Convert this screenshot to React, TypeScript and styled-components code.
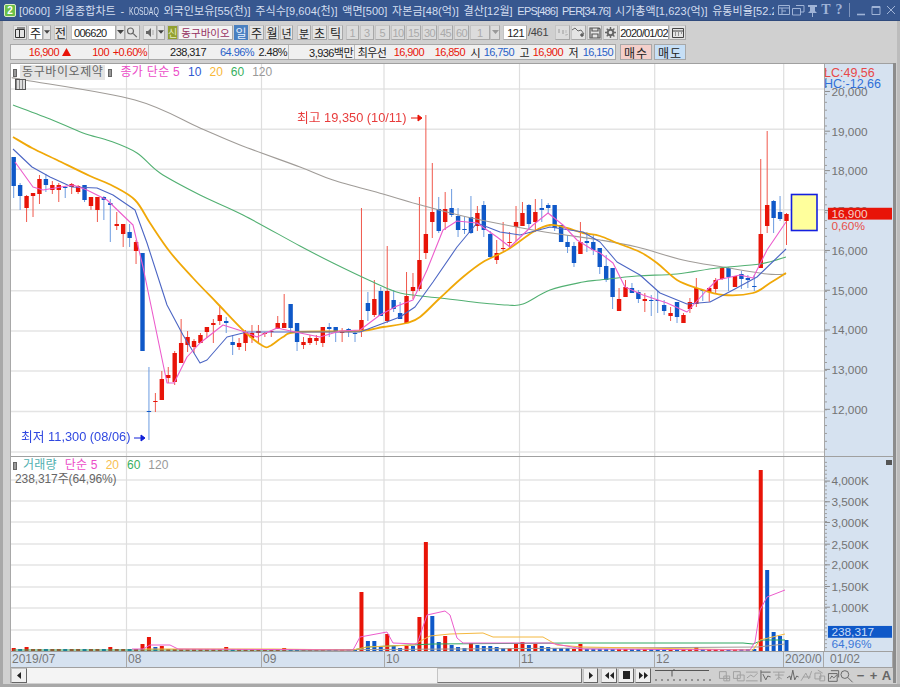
import React from 'react'
import styled, { createGlobalStyle } from 'styled-components'

const FONT = `"Liberation Sans", "Noto Sans CJK KR", sans-serif`
const RED = '#e81408'
const BLUE = '#0f58c8'

const GlobalStyle = createGlobalStyle`
  html, body { margin: 0; padding: 0; background: #d0d0d0; }
  * { box-sizing: border-box; }
`

const Window = styled.div`
  width: 900px;
  height: 687px;
  overflow: hidden;
  display: flex;
  flex-direction: column;
  background: #d0d0d0;
  font-family: ${FONT};
  border-bottom: 3px solid #a8a8a8;
  box-shadow: inset 3px 0 0 #a8a8a8, inset -3px 0 0 #bcbcbc;
`

const TitleBar = styled.div`
  height: 21px;
  flex: none;
  display: flex;
  align-items: center;
  padding-left: 4px;
  background: #37578f;
  color: #d4def0;
  font-size: 11px;
  white-space: nowrap;
  border-bottom: 1px solid #2f4a7c;
`

const Badge = styled.div`
  width: 12px;
  height: 13px;
  flex: none;
  border-radius: 2px;
  background: #6cc04a;
  border: 1px solid #dff0c8;
  color: #fff;
  font-size: 10px;
  font-weight: bold;
  line-height: 11px;
  text-align: center;
`

const TitleText = styled.div`
  width: 755px;
  margin-left: 3px;
  overflow: hidden;
  letter-spacing: 0.07px;
  word-spacing: 1.5px;
`

const NarrowWord = styled.span`
  display: inline-block;
  width: 30px;
  transform: scaleX(0.63);
  transform-origin: left center;
`

const TightWord = styled.span`
  letter-spacing: -0.8px;
`

const TitleIcons = styled.div`
  display: flex;
  align-items: center;
  margin-left: 3px;
  color: #9fb3d6;
`

const TitleGlyph = styled.span`
  width: 12px;
  margin-left: ${p => p.$ml ?? 0}px;
  text-align: center;
  font-size: 14px;
  font-weight: bold;
  font-family: "Liberation Serif", serif;
`

const TitleDivider = styled.div`
  width: 1px;
  height: 14px;
  margin: 0 6px 0 4px;
  background: #7f95bd;
`

const ToolRow = styled.div`
  height: 15px;
  flex: none;
  display: flex;
  align-items: stretch;
  margin-top: 4px;
  padding-left: 13px;
`

const Btn = styled.div`
  width: ${p => p.$w}px;
  margin-left: ${p => p.$ml ?? 0}px;
  flex: none;
  display: flex;
  align-items: center;
  justify-content: ${p => p.$right ? 'flex-end' : p.$left ? 'flex-start' : 'center'};
  padding-right: ${p => p.$right ? 2 : 0}px;
  padding-left: ${p => p.$left ? 2 : 0}px;
  font-size: ${p => p.$fs ?? 12}px;
  color: ${p => ({ white: '#222', raised: '#222', active: '#e8f0ff', flat: '#aaa', olive: '#e6ecc0', name: '#963060' }[p.$tone ?? 'raised'])};
  background: ${p => ({ white: '#fff', raised: '#e4e4e4', active: '#4a80c0', flat: '#dcdcdc', olive: '#92a030', name: '#f4f4f4' }[p.$tone ?? 'raised'])};
  border: 1px solid ${p => p.$tone === 'active' ? '#4a80c0' : '#a8a8a8'};
  border-left-color: ${p => p.$tone === 'active' ? '#4a80c0' : '#c4c4c4'};
  border-top-color: ${p => p.$tone === 'active' ? '#4a80c0' : '#c4c4c4'};
  white-space: nowrap;
  overflow: hidden;
  letter-spacing: ${p => p.$sp ?? 0}px;
`

const PageCount = styled.div`
  width: 19px;
  flex: none;
  margin-left: 1px;
  font-size: 11px;
  line-height: 15px;
  color: #444;
  letter-spacing: -0.3px;
`

const QuoteRow = styled.div`
  height: 16px;
  flex: none;
  display: flex;
  margin-top: 4px;
  padding-left: 10px;
`

const QuoteBox = styled.div`
  width: 606px;
  flex: none;
  display: flex;
  background: #f0f0f0;
  border: 1px solid #a8a8a8;
`

const Cell = styled.div`
  width: ${p => p.$w}px;
  flex: none;
  display: flex;
  align-items: center;
  justify-content: ${p => p.$center ? 'center' : 'flex-end'};
  padding-right: ${p => p.$center ? 0 : 1}px;
  font-size: 11px;
  letter-spacing: -0.55px;
  white-space: nowrap;
  color: ${p => p.$c ?? '#222'};
  border-right: ${p => p.$div ? '1px solid #bcbcbc' : 'none'};
`

const UpMark = styled.svg`
  width: 9px;
  height: 8px;
  margin-left: 3px;
  flex: none;
`

const OrderBtn = styled.div`
  width: ${p => p.$w}px;
  margin-left: ${p => p.$ml}px;
  flex: none;
  display: flex;
  align-items: center;
  justify-content: center;
  font-size: 12px;
  letter-spacing: 1px;
  color: #222;
  background: ${p => p.$bg};
  border: 1px solid #a8a8a8;
`

const Frame = styled.div`
  width: 882px;
  margin: 3px 0 0 11px;
  flex: none;
  display: flex;
  flex-direction: column;
  border-top: 1px solid #a0a0a0;
  box-shadow: 3px 0 0 #8c8c8c, -1px 0 0 #a8a8a8;
`

const Panel = styled.div`
  position: relative;
  height: ${p => p.$h}px;
  flex: none;
  display: flex;
  border-bottom: 1px solid #a0a0a0;
`

const Plot = styled.svg`
  width: 813px;
  height: 100%;
  flex: none;
  display: block;
  background: #fff;
  filter: blur(0.25px);
`

const Axis = styled.svg`
  width: 69px;
  height: 100%;
  flex: none;
  display: block;
  background: #d6e2f0;
  border-left: 1px solid #a8a8a8;
`

const Legend = styled.div`
  position: absolute;
  left: 2px;
  top: 1px;
  display: flex;
  align-items: center;
  gap: 8px;
  font-size: 12px;
  line-height: 15px;
  white-space: nowrap;
`

const LegendItem = styled.span`
  color: ${p => p.$c};
  letter-spacing: ${p => p.$sp ?? 0}px;
`

const Handle = styled.span`
  width: 4px;
  height: 8px;
  flex: none;
  background: #999;
  border: 1px solid #666;
  margin-right: ${p => p.$mr ?? 0}px;
`

const StockTag = styled.span`
  background: #e4e4e4;
  color: #666;
  padding: 0 2px;
  margin: 0 -5px;
  letter-spacing: 0.6px;
`

const GridBtn = styled.div`
  position: absolute;
  left: 4px;
  top: 15px;
  width: 11px;
  height: 11px;
  background: repeating-linear-gradient(90deg, #888 0 1px, #ddd 1px 3px);
  border: 1px solid #555;
`

const SubText = styled.div`
  position: absolute;
  left: 4px;
  top: 15px;
  font-size: 12px;
  line-height: 14px;
  color: #666;
  letter-spacing: -0.1px;
`

const AxisNote = styled.div`
  position: absolute;
  left: 813px;
  top: ${p => p.$top}px;
  font-size: 12.5px;
  line-height: 12px;
  color: ${p => p.$c};
  white-space: nowrap;
`

const CornerBtn = styled.div`
  position: absolute;
  right: 1px;
  top: 3px;
  width: 6px;
  height: 5px;
  background: #555;
`

const TimeRow = styled.div`
  height: 16px;
  flex: none;
  display: flex;
  background: #d6e2f0;
  border-bottom: 1px solid #a0a0a0;
`

const TimeCell = styled.div`
  width: ${p => p.$w}px;
  flex: none;
  padding-left: ${p => p.$pl ?? 1}px;
  font-size: 12px;
  line-height: 15px;
  color: #777;
  border-right: 1px solid #a8a8a8;
  white-space: nowrap;
`

const ScrollRow = styled.div`
  height: 15px;
  flex: none;
  display: flex;
  align-items: stretch;
`

const Track = styled.div`
  width: 555px;
  flex: none;
  display: flex;
  justify-content: flex-end;
  background: #f4f4f4;
`

const Thumb = styled.div`
  width: 145px;
  background: #f0f0f0;
  border: 1px solid #c4c4c4;
  border-right-color: #777;
  border-bottom-color: #777;
`

const ScrollBtn = styled.div`
  width: ${p => p.$w ?? 15}px;
  margin-left: ${p => p.$ml ?? 0}px;
  flex: none;
  display: flex;
  align-items: center;
  justify-content: center;
  background: #f0f0f0;
  border: 1px solid #c4c4c4;
  border-right-color: #666;
  border-bottom-color: #666;
`

const ZoomSlider = styled.svg`
  width: 57px;
  height: 15px;
  margin-left: 4px;
  flex: none;
`

const MiniIcons = styled.div`
  display: flex;
  align-items: center;
  margin-left: 6px;
  color: #999;
`

const Mini = styled.svg`
  width: 13.6px;
  height: 14px;
  flex: none;
`

const ZoomKey = styled.span`
  width: 13px;
  flex: none;
  text-align: center;
  font-size: 13px;
  font-weight: bold;
  color: #666;
`

type Candle = [string, number, number, number, number]

// c, high, body top, body bottom, low (page pixels)
const candles: Candle[] = [
  ['b',157,157,186,198],['b',183,185,196,210],['r',195,196,208,222],['r',193,193,196,217],
  ['r',175,179,194,204],['b',174,179,185,192],['r',181,185,190,194],['r',183,185,190,202],
  ['b',186,187,188,198],['r',183,184,187,194],['r',185,186,192,194],['b',185,185,200,202],
  ['r',197,197,206,210],['r',197,197,210,222],['b',196,197,200,220],['b',199,203,205,242],
  ['r',212,224,226,230],['r',224,224,234,247],['b',224,232,238,247],['r',240,242,251,264],
  ['b',253,253,351,351],['b',367,411,412,440],['r',393,401,402,412],['r',371,379,400,400],
  ['r',367,375,378,383],['r',351,353,382,385],['r',319,343,363,363],['r',331,337,345,352],
  ['r',339,341,347,353],['r',333,335,343,343],['r',327,327,332,338],['r',319,323,325,343],
  ['r',305,315,321,325],['b',317,321,323,333],['b',335,342,345,355],['r',338,343,347,350],
  ['r',330,332,343,351],['r',325,333,338,343],['r',325,331,333,343],['r',332,333,334,337],
  ['r',330,331,332,337],['r',316,323,329,329],['r',294,323,328,328],['b',304,304,328,332],
  ['b',323,323,342,351],['r',337,342,345,349],['r',335,338,343,345],['r',335,338,341,345],
  ['r',327,327,343,347],['b',323,327,329,337],['b',327,327,332,342],['r',328,331,333,342],
  ['b',328,329,332,337],['b',330,333,334,342],['r',208,320,331,337],['b',292,303,311,321],
  ['r',280,299,315,317],['b',287,291,316,316],['r',246,291,321,323],['b',290,300,309,312],
  ['b',302,313,319,319],['r',272,296,323,323],['r',273,287,291,299],['r',197,260,289,291],
  ['r',115,234,253,259],['r',163,212,222,238],['b',197,209,231,233],['r',192,209,222,230],
  ['b',189,208,215,217],['b',208,216,230,237],['b',217,229,230,234],['b',196,217,233,234],
  ['r',206,213,226,231],['b',201,205,230,237],['b',231,234,257,258],['r',240,253,260,264],
  ['r',222,248,249,251],['r',232,242,243,248],['r',206,222,227,241],['r',202,213,226,226],
  ['b',204,205,224,230],['r',199,212,222,232],['b',199,208,210,222],['b',203,205,208,213],
  ['b',205,205,228,231],['b',225,225,242,242],['b',235,242,247,253],['b',242,246,263,267],
  ['r',222,242,254,254],['b',232,241,243,252],['b',234,242,250,255],['b',248,248,267,274],
  ['b',255,266,280,282],['b',268,268,297,309],['r',288,299,311,311],['r',280,287,297,297],
  ['b',283,288,293,293],['b',290,292,299,303],['r',293,299,301,312],['b',295,300,301,316],
  ['b',291,300,301,313],['b',300,305,311,315],['r',307,313,316,321],['b',302,302,317,323],
  ['r',313,315,323,323],['r',298,302,309,313],['r',278,288,304,307],['b',290,290,291,301],
  ['r',288,288,292,302],['r',278,280,289,293],['r',267,268,279,280],['b',267,268,277,291],
  ['r',276,276,287,287],['b',271,274,279,289],['b',275,278,280,288],['b',275,286,287,291],
  ['r',159,234,268,268],['r',131,205,226,233],['b',200,201,218,233],['b',196,212,219,221],
  ['r',213,214,221,245],
]

const candleX = (i: number) => 13.7 + i * 6.44

// catmull-rom through the read-off points so the slow averages don't look kinked
const smooth = (pts: number[][]) => {
  let d = `M${pts[0][0]} ${pts[0][1]}`
  for (let i = 0; i < pts.length - 1; i++) {
    const p0 = pts[i - 1] ?? pts[i]
    const p1 = pts[i]
    const p2 = pts[i + 1]
    const p3 = pts[i + 2] ?? p2
    const c1x = p1[0] + (p2[0] - p0[0]) / 6
    const c1y = p1[1] + (p2[1] - p0[1]) / 6
    const c2x = p2[0] - (p3[0] - p1[0]) / 6
    const c2y = p2[1] - (p3[1] - p1[1]) / 6
    d += `C${c1x.toFixed(1)} ${c1y.toFixed(1)} ${c2x.toFixed(1)} ${c2y.toFixed(1)} ${p2[0]} ${p2[1]}`
  }
  return d
}

const toPoints = (pts: number[][]) => pts.map(p => p.join(',')).join(' ')

const ma5 = [[15,162],[33,187],[43,190],[73,185],[87,190],[107,200],[133,225],[143,267],[167,383],[174,383],[187,357],[200,343],[223,325],[245,332],[257,337],[277,328],[300,333],[320,337],[340,331],[360,330],[380,315],[397,306],[413,300],[427,270],[443,230],[457,221],[477,223],[497,237],[510,247],[533,225],[548,213],[563,225],[577,240],[593,250],[600,253],[613,263],[625,287],[643,295],[667,303],[687,312],[707,290],[717,280],[740,275],[753,278],[767,250],[786,222]]
const ma10 = [[13,149],[32,167],[50,177],[72,187],[97,188],[113,195],[135,210],[147,243],[167,305],[183,335],[200,363],[207,360],[227,337],[247,332],[293,332],[360,332],[400,317],[415,307],[433,282],[457,247],[477,223],[500,232],[520,235],[550,227],[583,232],[600,242],[617,262],[640,275],[660,293],[687,304],[710,302],[733,290],[757,277],[786,249]]
const ma20 = [[13,137],[32,148],[57,160],[90,176],[113,186],[135,200],[150,223],[170,252],[193,278],[217,303],[245,332],[263,346],[270,346],[283,337],[297,332],[360,331],[383,327],[407,323],[420,317],[440,298],[463,277],[483,262],[507,250],[533,232],[550,225],[567,228],[583,233],[600,236],[617,243],[640,252],[657,263],[677,280],[697,288],[723,295],[753,293],[770,283],[786,273]]
const ma60 = [[13,105],[50,119],[83,133],[110,141],[137,153],[160,173],[200,195],[243,215],[300,246],[333,263],[373,282],[400,293],[440,298],[473,302],[507,305],[523,304],[550,290],[583,282],[600,280],[637,276],[677,274],[717,268],[760,264],[786,257]]
const ma120 = [[13,78],[25,80],[135,100],[200,128],[240,145],[300,167],[333,180],[383,194],[417,204],[467,217],[533,230],[600,240],[637,247],[683,260],[723,267],[767,274],[786,274]]

const volMa5 = [[132,649],[143,649],[150,645],[170,645],[178,649],[353,650],[360,637],[387,632],[393,643],[417,644],[427,615],[445,611],[450,615],[457,638],[463,643],[550,643],[583,649],[750,650],[755,642],[760,610],[767,597],[785,590]]
const volMa20 = [[143,649],[273,649],[353,650],[367,647],[413,645],[430,636],[450,634],[483,633],[493,637],[543,637],[557,645],[583,647],[753,650],[760,640],[785,634]]
const volMa60 = [[13,650],[353,650],[367,647],[433,644],[570,643],[743,643],[753,644],[763,640],[785,640]]
const volMa120 = [[300,650],[758,647],[785,644]]

// volume bars that stand out: index -> [height, colour]
const volumes: Record<number, [number, string]> = {
  0:[3,'r'],2:[4,'r'],15:[4,'r'],20:[7,'r'],21:[14,'r'],22:[4,'b'],23:[5,'r'],33:[4,'r'],42:[3,'r'],
  54:[59,'r'],55:[10,'b'],56:[10,'b'],57:[4,'b'],58:[17,'r'],59:[5,'b'],60:[3,'b'],61:[5,'r'],62:[5,'b'],
  63:[34,'r'],64:[109,'r'],65:[35,'b'],66:[9,'b'],67:[15,'r'],68:[6,'b'],69:[4,'b'],70:[3,'b'],71:[8,'r'],
  72:[6,'b'],73:[5,'b'],74:[5,'b'],75:[4,'b'],76:[3,'b'],77:[3,'r'],78:[7,'r'],79:[9,'r'],80:[6,'b'],
  81:[7,'r'],82:[5,'b'],83:[4,'b'],84:[3,'b'],85:[3,'b'],86:[3,'b'],87:[2,'r'],88:[7,'r'],106:[4,'r'],
  116:[181,'r'],117:[81,'b'],118:[19,'b'],119:[15,'b'],120:[11,'b'],
}

const monthLines = [126.5, 261.5, 384, 519.5, 654.7, 783.7]
const priceLines = [89, 129.3, 169.3, 209.7, 250.3, 290.7, 331, 371, 411.5, 452]
const volumeLines = [480, 501, 522, 544, 565, 587, 608, 630]

const GridLines = ({ rows, top, bottom }: { rows: number[]; top: number; bottom: number }) => (
  <g>
    {rows.map(y => <line key={y} x1={11} x2={824} y1={y} y2={y} stroke="#e4e4e4" strokeWidth={1.6} />)}
    {monthLines.map(x => <line key={x} x1={x} x2={x} y1={top} y2={bottom} stroke="#dedede" strokeWidth={1.2} />)}
  </g>
)

const PriceChart = () => (
  <Plot viewBox="11 64 813 392">
    <GridLines rows={priceLines} top={64} bottom={456} />
    {candles.map(([c, hi, top, bot, lo], i) => {
      const x = candleX(i)
      return (
        <g key={i}>
          <line x1={x} x2={x} y1={hi} y2={lo} stroke={c === 'r' ? '#f0584c' : '#6c9be0'} strokeWidth={1} />
          <rect x={x - 2.2} y={top} width={4.4} height={Math.max(bot - top, 1)} fill={c === 'r' ? RED : BLUE} />
        </g>
      )
    })}
    <path d={smooth(ma120)} fill="none" stroke="#a09c98" strokeWidth={1.1} />
    <path d={smooth(ma60)} fill="none" stroke="#52b072" strokeWidth={1.1} />
    <path d={smooth(ma20)} fill="none" stroke="#f0a808" strokeWidth={1.8} />
    <polyline points={toPoints(ma10)} fill="none" stroke="#4c66c4" strokeWidth={1.1} strokeLinejoin="round" />
    <polyline points={toPoints(ma5)} fill="none" stroke="#ec5ccc" strokeWidth={1.1} strokeLinejoin="round" />
    <rect x={791.5} y={194.5} width={25.5} height={36} fill="#ffff9c" stroke="#1420e0" strokeWidth={1.6} />
    <text x={297} y={122} fontSize={12.8} fill="#e83c3c" fontFamily={FONT}>최고 19,350 (10/11)</text>
    <path d="M411 118h10M418 115l4 3-4 3z" fill={RED} stroke={RED} strokeWidth={1} />
    <text x={21} y={441} fontSize={12.8} fill="#3048e0" fontFamily={FONT}>최저 11,300 (08/06)</text>
    <path d="M134 438h10M141 435l4 3-4 3z" fill="#1020d8" stroke="#1020d8" strokeWidth={1} />
  </Plot>
)

const VolumeChart = () => (
  <Plot viewBox="11 457 813 194">
    <GridLines rows={volumeLines} top={457} bottom={651} />
    {candles.map(([c], i) => {
      const v = volumes[i]
      const h = v ? v[0] : 2
      const col = v ? v[1] : c
      return <rect key={i} x={candleX(i) - 2} y={651 - h} width={4} height={h} fill={col === 'r' ? RED : BLUE} />
    })}
    <polyline points={toPoints(volMa120)} fill="none" stroke="#a09c98" strokeWidth={1} />
    <polyline points={toPoints(volMa60)} fill="none" stroke="#2ea860" strokeWidth={1} />
    <polyline points={toPoints(volMa20)} fill="none" stroke="#f4b840" strokeWidth={1} />
    <polyline points={toPoints(volMa5)} fill="none" stroke="#ec5ccc" strokeWidth={1} />
  </Plot>
)

const axisMinor = (from: number, to: number, step: number) => {
  const out: number[] = []
  for (let y = from; y < to; y += step) out.push(y)
  return out
}

const priceLabels: [string, number][] = [['20,000', 89], ['19,000', 129.3], ['18,000', 169.3], ['17,000', 209.7], ['16,000', 250.3], ['15,000', 290.7], ['14,000', 331], ['13,000', 371], ['12,000', 411.5]]
const volumeLabels: [string, number][] = [['4,000K', 480], ['3,500K', 501], ['3,000K', 522], ['2,500K', 544], ['2,000K', 565], ['1,500K', 587], ['1,000K', 608]]

const AxisTicks = ({ labels, top, bottom, step }: { labels: [string, number][]; top: number; bottom: number; step: number }) => (
  <g fontFamily={FONT} fontSize={12} fill="#737373">
    {axisMinor(top, bottom, step).map(y => <line key={y} x1={824} x2={826} y1={y} y2={y} stroke="#9a9a9a" />)}
    {labels.map(([t, y]) => (
      <g key={t}>
        <line x1={824} x2={829} y1={y} y2={y} stroke="#8a8a8a" />
        <text x={830.5} y={y + 4.5}>{t}</text>
      </g>
    ))}
  </g>
)

const PriceAxis = () => (
  <Axis viewBox="824 64 69 392">
    <AxisTicks labels={priceLabels} top={68} bottom={456} step={8} />
    <rect x={827} y={207} width={65} height={12} fill={RED} />
    <text x={830.5} y={217.5} fontSize={12} fill="#f4d0c8" fontFamily={FONT}>16,900</text>
    <text x={830.5} y={230} fontSize={12} fill="#e85048" fontFamily={FONT}>0,60%</text>
  </Axis>
)

const VolumeAxis = () => (
  <Axis viewBox="824 457 69 194">
    <AxisTicks labels={volumeLabels} top={461} bottom={651} step={4} />
    <rect x={827} y={627} width={65} height={12} fill={BLUE} />
    <text x={830.5} y={637.5} fontSize={12} fill="#c8dcf8" fontFamily={FONT}>238,317</text>
    <text x={830.5} y={649.5} fontSize={12} fill="#3c78d8" fontFamily={FONT}>64,96%</text>
  </Axis>
)

const Caret = () => (
  <svg width="7" height="5" viewBox="0 0 7 5"><path d="M0 0h7L3.5 4z" fill="#444" /></svg>
)

const MiniIcon = ({ d, dark }: { d: string; dark?: boolean }) => (
  <Mini viewBox="0 0 14 14"><path d={d} fill="none" stroke={dark ? '#666' : '#a0a0a0'} strokeWidth={1} /></Mini>
)

const Transport = ({ d }: { d: string }) => (
  <svg width="11" height="9" viewBox="0 0 11 9"><path d={d} fill="#222" /></svg>
)

export default function App() {
  return (
    <Window>
      <GlobalStyle />
      <TitleBar>
        <Badge>2</Badge>
        <TitleText>[0600] 키움종합차트 - <NarrowWord>KOSDAQ</NarrowWord> 외국인보유[55(천)] 주식수[9,604(천)] 액면[500] 자본금[48(억)] 결산[12월] <TightWord>EPS[486]</TightWord> <TightWord>PER[34.76]</TightWord> 시가총액[1,623(억)] 유통비율[52.2</TitleText>
        <TitleIcons>
          <svg width="14" height="12" viewBox="0 0 14 12"><path d="M1.5 1.5h11v9h-11zM1.5 4h11M5 4v6.5M5 7h4" fill="none" stroke="currentColor" /></svg>
          <svg width="14" height="12" viewBox="0 0 14 12"><path d="M5 1.5h8V8H10M1.5 4.5h8V11h-8z" fill="none" stroke="currentColor" /></svg>
          <svg width="13" height="13" viewBox="0 0 13 13" style={{ marginLeft: 1 }}><path d="M2 1h9v2H9v4l2 2H7v4H6V9H2l2-2V3H2z" fill="currentColor" /></svg>
          <TitleGlyph $ml={1}>T</TitleGlyph>
          <TitleGlyph $ml={1}>?</TitleGlyph>
          <TitleDivider />
          <svg width="10" height="12" viewBox="0 0 10 12"><path d="M1 10.5h8" stroke="currentColor" strokeWidth={1.6} /></svg>
          <svg width="10" height="12" viewBox="0 0 10 12" style={{ marginLeft: 5 }}><path d="M1 2.5h8v8H1zM1 3.5h8" fill="none" stroke="currentColor" /></svg>
          <svg width="10" height="12" viewBox="0 0 10 12" style={{ marginLeft: 5 }}><path d="M1 2l8 8M9 2l-8 8" stroke="currentColor" /></svg>
        </TitleIcons>
      </TitleBar>

      <ToolRow>
        <Btn $w={14}><svg width="11" height="11" viewBox="0 0 11 11"><path d="M.5 2.5h9v8h-9zM4.5 2.5v8M2 1h8" fill="none" stroke="#333" /></svg></Btn>
        <Btn $w={15} $ml={1} $tone="white">주</Btn>
        <Btn $w={8}><Caret /></Btn>
        <Btn $w={13} $ml={3}>전</Btn>
        <Btn $w={45} $ml={4} $tone="white" $left $fs={11} $sp={-0.7}>006620</Btn>
        <Btn $w={9}><Caret /></Btn>
        <Btn $w={15}><svg width="11" height="11" viewBox="0 0 11 11"><path d="M6.5 4a3 3 0 1 1-6 0 3 3 0 0 1 6 0zM5.8 6.2l4 4" fill="none" stroke="#666" strokeWidth={1.2} /></svg></Btn>
        <Btn $w={14} $ml={3}><svg width="11" height="9" viewBox="0 0 11 9"><path d="M1 3h2l3-3v9L3 6H1z" fill="#666" /><path d="M8 2v5" stroke="#aaa" /></svg></Btn>
        <Btn $w={8}><Caret /></Btn>
        <Btn $w={11} $ml={2} $tone="olive" $fs={10}>신</Btn>
        <Btn $w={55} $tone="name" $fs={10.5}>동구바이오</Btn>
        <Btn $w={14} $ml={1} $tone="active">일</Btn>
        <Btn $w={15} $ml={1}>주</Btn>
        <Btn $w={14} $ml={1}>월</Btn>
        <Btn $w={13} $ml={1} $fs={11}>년</Btn>
        <Btn $w={14} $ml={4} $fs={11}>분</Btn>
        <Btn $w={15} $ml={1}>초</Btn>
        <Btn $w={15} $ml={1}>틱</Btn>
        <Btn $w={13} $ml={3} $tone="flat" $fs={11}>1</Btn>
        <Btn $w={14} $ml={1} $tone="flat" $fs={11}>3</Btn>
        <Btn $w={15} $ml={1} $tone="flat" $fs={11}>5</Btn>
        <Btn $w={14} $ml={1} $tone="flat" $fs={11} $sp={-0.5}>10</Btn>
        <Btn $w={15} $ml={1} $tone="flat" $fs={11} $sp={-0.5}>15</Btn>
        <Btn $w={15} $ml={1} $tone="flat" $fs={11} $sp={-0.5}>30</Btn>
        <Btn $w={15} $ml={1} $tone="flat" $fs={11} $sp={-0.5}>45</Btn>
        <Btn $w={15} $ml={1} $tone="flat" $fs={11} $sp={-0.5}>60</Btn>
        <Btn $w={20} $ml={1} $tone="flat" $fs={11}>1</Btn>
        <Btn $w={10} $tone="flat"><svg width="7" height="5" viewBox="0 0 7 5"><path d="M0 0h7L3.5 4z" fill="#999" /></svg></Btn>
        <Btn $w={24} $ml={3} $tone="white" $right $fs={11} $sp={-0.5}>121</Btn>
        <PageCount>/461</PageCount>
        <Btn $w={15} $ml={8} $tone="flat"><svg width="12" height="11" viewBox="0 0 12 11"><path d="M1 2h2v4H1zM5 3h2v4H5zM9 7h2v1H9z" fill="#bbb" /><path d="M9 3v3M8 8h2" stroke="#bbb" /></svg></Btn>
        <Btn $w={15} $ml={1}><svg width="13" height="11" viewBox="0 0 13 11"><path d="M0 3l3-2 3 3 3-1 3 4" fill="none" stroke="#666" /><path d="M10 6v4M8 8h4" stroke="#333" /></svg></Btn>
        <Btn $w={15} $ml={1}><svg width="12" height="12" viewBox="0 0 12 12"><path d="M1 1h9l1 1v9H1zM3 1v3h6V1M3 11V7h6v4" fill="none" stroke="#555" strokeWidth={1.2} /></svg></Btn>
        <Btn $w={15} $ml={1}><svg width="11" height="11" viewBox="0 0 11 11"><circle cx="5.5" cy="5.5" r="2.8" fill="none" stroke="#666" strokeWidth={2} /><path d="M5.5 0v2M5.5 9v2M0 5.5h2M9 5.5h2M1.7 1.7l1.4 1.4M8 8l1.4 1.4M1.7 9.3L3.1 8M8 3l1.4-1.4" stroke="#666" strokeWidth={1.4} /></svg></Btn>
        <Btn $w={50} $ml={1} $tone="white" $fs={11} $sp={-0.75}>2020/01/02</Btn>
        <Btn $w={17}><svg width="12" height="11" viewBox="0 0 12 11"><path d="M.5 1.5h11v9H.5zM.5 4h11" fill="none" stroke="#444" /><path d="M3 6h1M6 6h1M9 6h1M3 8h1M6 8h1" stroke="#444" /></svg></Btn>
      </ToolRow>

      <QuoteRow>
        <QuoteBox>
          <Cell $w={61} $c={RED}>16,900<UpMark viewBox="0 0 9 8"><path d="M4.5 0L9 8H0z" fill={RED} /></UpMark></Cell>
          <Cell $w={38} $c={RED}>100</Cell>
          <Cell $w={39} $c={RED} $div>+0.60%</Cell>
          <Cell $w={58}>238,317</Cell>
          <Cell $w={48} $c="#2860c8">64.96%</Cell>
          <Cell $w={34} $div>2.48%</Cell>
          <Cell $w={66} $div>3,936백만</Cell>
          <Cell $w={34} $center>최우선</Cell>
          <Cell $w={36} $c={RED}>16,900</Cell>
          <Cell $w={41} $c={RED}>16,850</Cell>
          <Cell $w={15}>시</Cell>
          <Cell $w={34} $c="#2860c8">16,750</Cell>
          <Cell $w={15}>고</Cell>
          <Cell $w={34} $c={RED}>16,900</Cell>
          <Cell $w={15}>저</Cell>
          <Cell $w={35} $c="#2860c8">16,150</Cell>
        </QuoteBox>
        <OrderBtn $w={32} $ml={4} $bg="#f4cfca">매수</OrderBtn>
        <OrderBtn $w={32} $ml={2} $bg="#c6dff6">매도</OrderBtn>
      </QuoteRow>

      <Frame>
        <Panel $h={393}>
          <PriceChart />
          <PriceAxis />
          <Legend>
            <Handle />
            <StockTag>동구바이오제약</StockTag>
            <Handle />
            <LegendItem $c="#ec4cc8" $sp={0.3}>종가 단순 5</LegendItem>
            <LegendItem $c="#3058d0">10</LegendItem>
            <LegendItem $c="#f8b838">20</LegendItem>
            <LegendItem $c="#38b060">60</LegendItem>
            <LegendItem $c="#999">120</LegendItem>
          </Legend>
          <GridBtn />
          <AxisNote $top={3} $c="#e84848">LC:49,56</AxisNote>
          <AxisNote $top={14} $c="#3070d8">HC:-12,66</AxisNote>
        </Panel>
        <Panel $h={195}>
          <VolumeChart />
          <VolumeAxis />
          <Legend>
            <Handle $mr={-2} />
            <LegendItem $c="#50b0b0" $sp={0.2}>거래량</LegendItem>
            <LegendItem $c="#ec4cc8" $sp={0.2}>단순 5</LegendItem>
            <LegendItem $c="#f8c050">20</LegendItem>
            <LegendItem $c="#38b060">60</LegendItem>
            <LegendItem $c="#999">120</LegendItem>
          </Legend>
          <SubText>238,317주(64,96%)</SubText>
          <CornerBtn />
        </Panel>
        <TimeRow>
          <TimeCell $w={116}>2019/07</TimeCell>
          <TimeCell $w={135}>08</TimeCell>
          <TimeCell $w={123}>09</TimeCell>
          <TimeCell $w={135}>10</TimeCell>
          <TimeCell $w={135}>11</TimeCell>
          <TimeCell $w={129}>12</TimeCell>
          <TimeCell $w={40}>2020/0</TimeCell>
          <TimeCell $w={69} $pl={6}>01/02</TimeCell>
        </TimeRow>
        <ScrollRow>
          <ScrollBtn $w={16}><svg width="5" height="7" viewBox="0 0 5 7"><path d="M4 0v7L0 3.5z" fill="#222" /></svg></ScrollBtn>
          <Track><Thumb /></Track>
          <ScrollBtn $ml={1}><svg width="5" height="7" viewBox="0 0 5 7"><path d="M1 0v7l4-3.5z" fill="#222" /></svg></ScrollBtn>
          <ScrollBtn $ml={3} $w={16}><Transport d="M5 1v7L1 4.5zM10 1v7L6 4.5z" /></ScrollBtn>
          <ScrollBtn $ml={1} $w={16}><Transport d="M2 0h7v8H2z" /></ScrollBtn>
          <ScrollBtn $ml={1} $w={16}><Transport d="M1 1v7l4-3.5zM6 1v7l4-3.5z" /></ScrollBtn>
          <ZoomSlider viewBox="0 0 57 15">
            <path d="M0 2.5h54M17 2.5v6M19 2V1" stroke="#555" fill="none" />
            <path d="M1 11v2M7 11v2M13 11v2M19 11v2M25 11v2M31 11v2M37 11v2M43 11v2M49 11v2M55 11v2" stroke="#555" />
          </ZoomSlider>
          <MiniIcons>
            <MiniIcon d="M1.5 2.5h7v7h-7zM6 7h6v5H6zM9 7v5M6 9.5h6" />
            <MiniIcon d="M1.5 2.5h7v7h-7zM5.5 6h7v6h-7z" />
            <MiniIcon d="M1 3h12M1 12h12M2 9l4-3 3 2 4-4" />
            <MiniIcon dark d="M2 1v12M2 3h10M4 5l3 6 2-4 3 1" />
            <MiniIcon d="M1 3h12M3 6h9M7 3v8M4 11l3-3 3 2" />
            <MiniIcon dark d="M1 9l3-2 1 4 2-10 2 10 2-4 2 1" />
            <MiniIcon d="M1 12l5-8 3 6 3-8M3 8h8" />
            <MiniIcon d="M2 4h6v6H2zM7 7h5v5H7zM5 1l5 3" />
            <MiniIcon dark d="M4 1.5h8v7M1.5 4.5h9v8h-9zM3 10l2-3 2 2 3-3" />
            <MiniIcon dark d="M9 5.5a4 4 0 1 1-8 0 4 4 0 0 1 8 0zM8 8.5l5 5" />
            <ZoomKey>−</ZoomKey>
            <ZoomKey>+</ZoomKey>
            <ZoomKey>A</ZoomKey>
          </MiniIcons>
        </ScrollRow>
      </Frame>
    </Window>
  )
}
